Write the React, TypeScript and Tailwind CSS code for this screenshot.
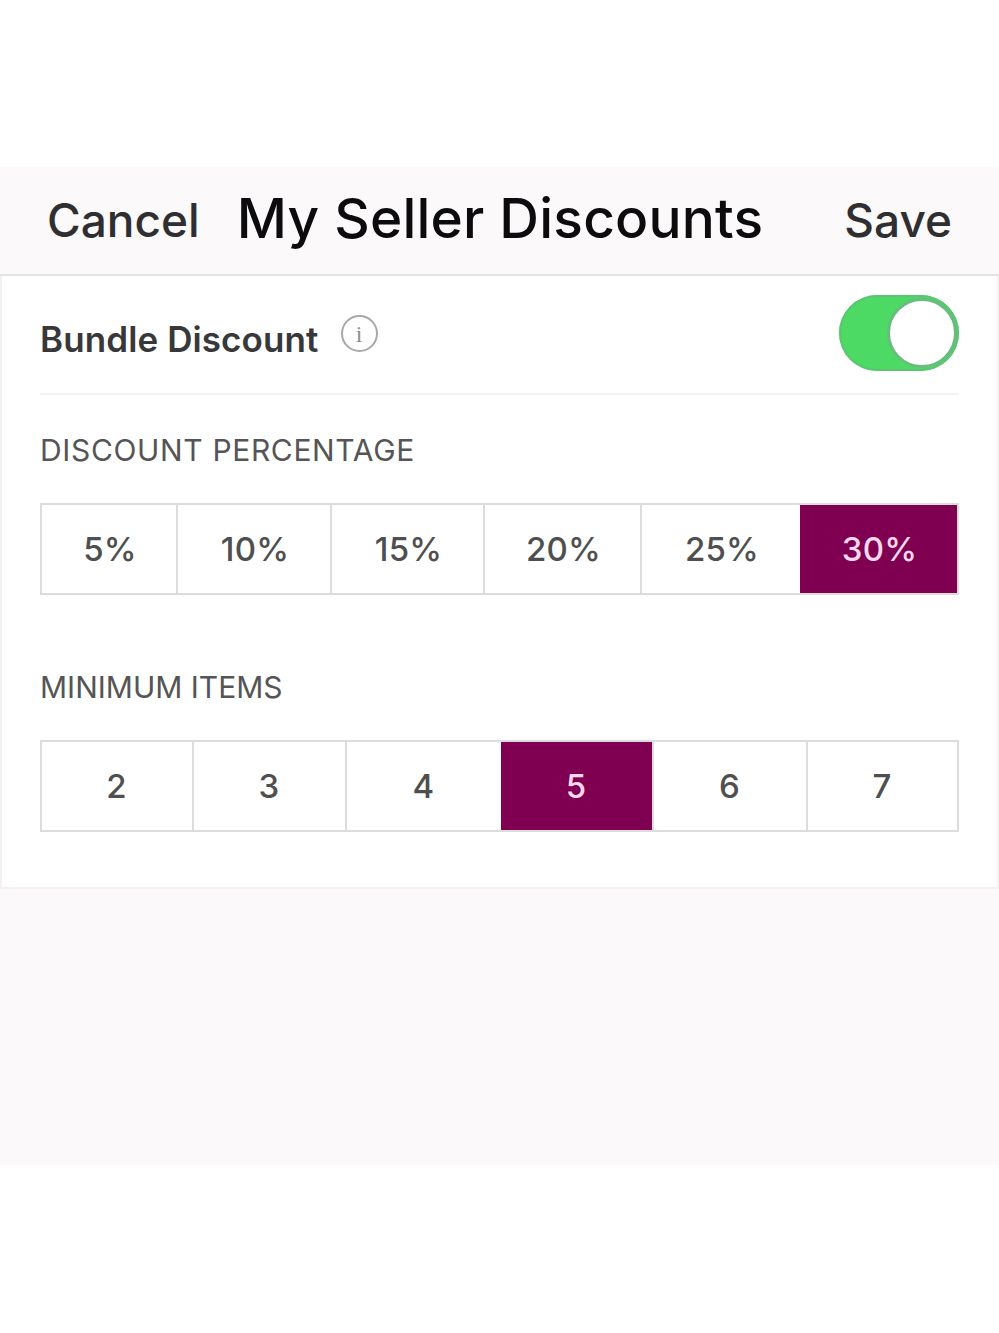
const font = "[font-family:Inter,'Noto_Sans',sans-serif]";

function Segments({
  items,
  columns,
  active,
  cellClass,
}: {
  items: string[];
  columns: string;
  active: string;
  cellClass: string;
}) {
  return (
    <div className={`grid h-[92px] border-2 border-[#dcdcdc] bg-white ${columns}`}>
      {items.map((item, i) => (
        <div
          key={item}
          className={`flex items-center justify-center pt-[2px] text-[33px] font-medium tracking-[0.2px] ${cellClass} ${
            item === active
              ? "bg-[#7f0050] text-[#fbd8ee]"
              : "text-[#4f4f4f]"
          } ${i > 0 && item !== active ? "border-l-2 border-[#dcdcdc]" : ""}`}
        >
          {item}
        </div>
      ))}
    </div>
  );
}

export default function App() {
  return (
    <div className={`flex h-[1333px] w-[999px] flex-col overflow-hidden bg-white ${font}`}>
      <div className="h-[167px] shrink-0" />
      <div className="flex h-[109px] shrink-0 items-center border-b-2 border-[#e6e3e4] bg-[#fbf9fa] pb-[2px]">
        <span className="ml-[47px] translate-y-[1px] text-[46px] font-medium text-[#2f2f31]">Cancel</span>
        <span className="ml-[37px] -translate-y-[1px] text-[55px] font-medium tracking-[0.2px] text-[#0c0c0e]">My Seller Discounts</span>
        <span className="ml-auto mr-[47px] translate-y-[1px] text-[46px] font-medium text-[#2f2f31]">Save</span>
      </div>
      <div className="flex h-[613px] shrink-0 flex-col border-x-2 border-b-2 border-[#f3f1f2] bg-white px-[38px]">
        <div className="flex h-[119px] shrink-0 items-center border-b-2 border-[#f4f3f3]">
          <span className="translate-y-[5px] text-[35px] font-semibold tracking-[0.1px] text-[#38383a]">Bundle Discount</span>
          <span className="ml-[22px] -translate-y-[1px] flex h-[37px] w-[37px] items-center justify-center rounded-full border-2 border-[#a9a9a9] font-['Liberation_Serif',serif] text-[24px] text-[#8f8f8f]">
            i
          </span>
          <div className="ml-auto flex h-[76px] w-[120px] -translate-y-[2px] items-center justify-end rounded-full bg-[#4cd964] p-[2px] shadow-[inset_0_0_0_2px_#5cc574]">
            <div className="h-[70px] w-[70px] rounded-full border-[3px] border-[#68bd7e] bg-white" />
          </div>
        </div>
        <div className="mt-[36px] text-[30px] leading-[38px] tracking-[0.65px] text-[#555557]">DISCOUNT PERCENTAGE</div>
        <div className="mt-[34px]">
          <Segments
            items={["5%", "10%", "15%", "20%", "25%", "30%"]}
            columns="grid-cols-[134px_154px_153px_157px_160px_1fr]"
            active="30%"
            cellClass="pl-[2px]"
          />
        </div>
        <div className="mt-[73px] text-[30px] leading-[38px] text-[#555557]">MINIMUM ITEMS</div>
        <div className="mt-[34px]">
          <Segments
            items={["2", "3", "4", "5", "6", "7"]}
            columns="grid-cols-[150px_153px_156px_151px_154px_1fr]"
            active="5"
            cellClass="pr-[1px]"
          />
        </div>
      </div>
      <div className="h-[276px] shrink-0 bg-[#fbf9fa]" />
      <div className="flex-1" />
    </div>
  );
}
